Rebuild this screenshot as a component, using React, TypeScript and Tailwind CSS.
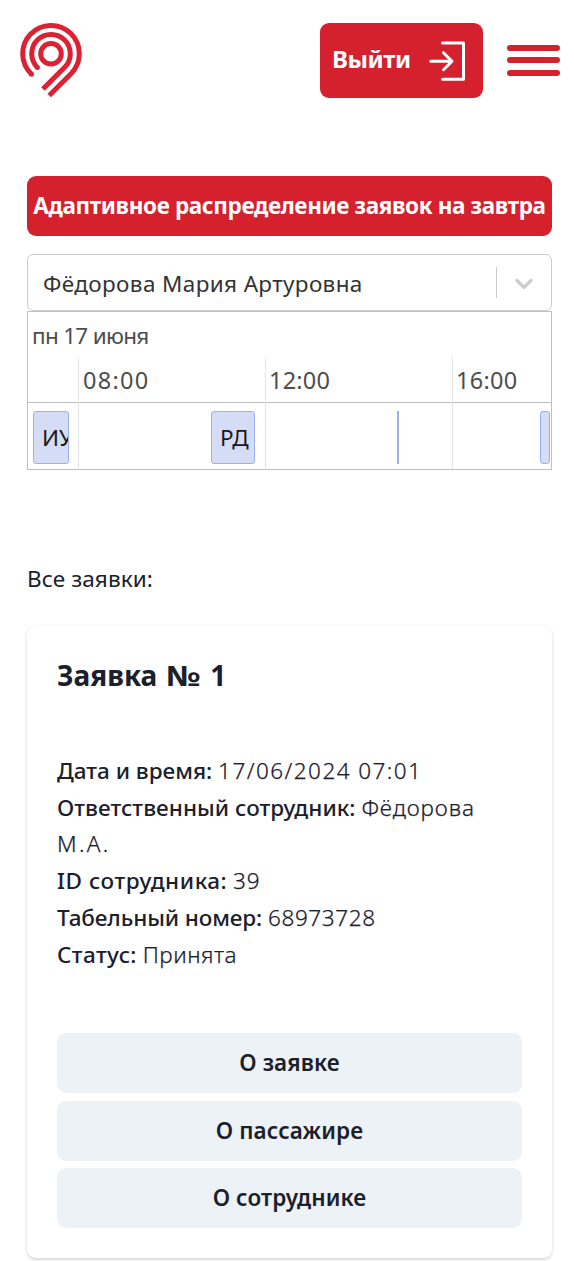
import { ReactNode } from "react";

function Logo() {
  return (
    <svg width="64" height="78" viewBox="19 21 64 78" fill="none" stroke="#dc2133" strokeWidth="5">
      <circle cx="51" cy="53.7" r="10.3" />
      <path d="M31.5 74.2A28.3 28.3 0 1 1 71 73.7L49.2 95.5" />
      <path d="M37.4 67.4A19.3 19.3 0 1 1 64.65 67.35L43 89" />
      <g fill="#dc2133" stroke="none">
        <circle cx="31.5" cy="74.2" r="2.5" />
        <circle cx="37.4" cy="67.6" r="2.5" />
      </g>
    </svg>
  );
}

function ExitIcon() {
  return (
    <svg width="38" height="42" viewBox="429 40 38 42" fill="none" stroke="#fff" strokeWidth="3" strokeLinecap="round" strokeLinejoin="round">
      <path d="M442.5 43H463.5V79.3H442.5" />
      <path d="M430.7 61.2H452M443.5 52.7L452 61.2L443.5 69.7" />
    </svg>
  );
}

function Header() {
  return (
    <header className="flex h-[121px] items-start pl-[19px] pr-[14px]">
      <div className="pt-[21px]"><Logo /></div>
      <button className="ml-auto mt-[23px] flex h-[75px] w-[163px] items-center justify-between rounded-[9px] bg-[#d5212d] pl-[12px] pr-[16px] text-white">
        <span className="whitespace-nowrap pb-[4px] text-[24px] font-bold tracking-[-0.4px]">Выйти</span>
        <ExitIcon />
      </button>
      <button className="ml-[24px] mt-[44.5px] flex w-[53px] flex-col gap-[6.5px]">
        <span className="h-[6px] rounded-full bg-[#d5212d]" />
        <span className="h-[6px] rounded-full bg-[#d5212d]" />
        <span className="h-[6px] rounded-full bg-[#d5212d]" />
      </button>
    </header>
  );
}

function EmployeeSelect() {
  return (
    <div className="mt-[18px] flex h-[57px] items-center rounded-[6px] border border-[#cccccc] pl-[15px] text-[22.5px] text-[#333333]">
      <span className="whitespace-nowrap pt-[2px] tracking-[0.37px]">Фёдорова Мария Артуровна</span>
      <span className="ml-auto h-[31px] w-px bg-[#cccccc]" />
      <svg className="ml-[12px] mr-[12px]" width="30" height="30" viewBox="0 0 20 20" fill="#cccccc">
        <path d="M4.516 7.548c0.436-0.446 1.043-0.481 1.576 0l3.908 3.747 3.908-3.747c0.533-0.481 1.141-0.446 1.574 0 0.436 0.445 0.408 1.197 0 1.615-0.406 0.418-4.695 4.502-4.695 4.502-0.217 0.223-0.502 0.335-0.787 0.335s-0.57-0.112-0.789-0.335c0 0-4.287-4.084-4.695-4.502s-0.436-1.17 0-1.615z" />
      </svg>
    </div>
  );
}

function Timeline() {
  return (
    <div className="h-[159px] overflow-hidden border border-[#bfbfbf] text-[22.5px] text-[#4d4d4d]">
      <div className="h-[45px] pl-[4px] leading-[48px] tracking-[-0.7px]">пн 17 июня</div>
      <div className="grid h-[46px] grid-cols-[50px_187px_187px_1fr] border-b border-[#bfbfbf] text-[23.5px] leading-[46px]">
        <span />
        <span className="border-l border-[#e5e5e5] pl-[4px] tracking-[1.3px]">08:00</span>
        <span className="border-l border-[#e5e5e5] pl-[3px] tracking-[0.2px]">12:00</span>
        <span className="border-l border-[#e5e5e5] pl-[3px] tracking-[0.3px]">16:00</span>
      </div>
      <div className="relative grid h-[66px] grid-cols-[50px_187px_187px_1fr] text-[#1a1a1a]">
        <span />
        <span className="border-l border-[#e5e5e5]" />
        <span className="border-l border-[#e5e5e5]" />
        <span className="border-l border-[#e5e5e5]" />
        <div className="absolute left-[5px] top-[8px] h-[53px] w-[36px] overflow-hidden rounded-[3px] border border-[#97b0f8] bg-[#d5ddf6] pl-[8px] leading-[51px]">ИУ</div>
        <div className="absolute left-[183px] top-[8px] h-[53px] w-[44px] overflow-hidden rounded-[3px] border border-[#97b0f8] bg-[#d5ddf6] pl-[8px] leading-[51px]">РД</div>
        <div className="absolute left-[369px] top-[8px] h-[53px] w-[2px] bg-[#97b0f8]" />
        <div className="absolute left-[512px] top-[8px] h-[53px] w-[10px] rounded-[3px] border border-[#97b0f8] bg-[#d5ddf6]" />
      </div>
    </div>
  );
}

function Field({ label, labelClass = "", valueClass = "", children }: { label: string; labelClass?: string; valueClass?: string; children: ReactNode }) {
  return (
    <p>
      <span className={`font-medium ${labelClass}`}>{label}</span>{" "}
      <span className={`font-light [-webkit-text-stroke:0.25px_#1a202c] ${valueClass}`}>{children}</span>
    </p>
  );
}

function RequestCard() {
  return (
    <article className="mt-[30px] h-[632px] rounded-[9px] bg-white px-[30px] shadow-[0_1.5px_4.5px_rgba(0,0,0,0.1),0_1.5px_3px_rgba(0,0,0,0.06)]">
      <h2 className="pt-[29px] text-[28px] font-bold leading-[40px]">Заявка <span className="ml-[1px] tracking-[2.5px]"><span className="inline-block origin-left scale-x-[1.2] pr-[3.5px]">№</span> 1</span></h2>
      <div className="mt-[58px] text-[22.5px] leading-[36.7px]">
        <Field label="Дата и время:" valueClass="tracking-[1.45px]">17/06/2024 07:01</Field>
        <Field label="Ответственный сотрудник:" labelClass="tracking-[0.05px]" valueClass="tracking-[0.9px]">Фёдорова<br /><span className="tracking-[2.3px]">М.А.</span></Field>
        <Field label="ID сотрудника:" labelClass="tracking-[0.55px]" valueClass="tracking-[0.8px]">39</Field>
        <Field label="Табельный номер:" labelClass="tracking-[-0.1px]" valueClass="tracking-[0.6px]">68973728</Field>
        <Field label="Статус:" labelClass="tracking-[0.4px]" valueClass="tracking-[0.5px]">Принята</Field>
      </div>
      <div className="mt-[60px] flex flex-col gap-[7.5px] text-[22.5px] font-semibold tracking-[0.1px]">
        <button className="h-[60px] rounded-[9px] bg-[#edf2f7]">О заявке</button>
        <button className="h-[60px] rounded-[9px] bg-[#edf2f7]">О пассажире</button>
        <button className="h-[60px] rounded-[9px] bg-[#edf2f7]">О сотруднике</button>
      </div>
    </article>
  );
}

export default function App() {
  return (
    <div className="h-[1261px] overflow-hidden bg-white font-['Noto_Sans',sans-serif] text-[#1a202c]">
      <Header />
      <main className="pl-[27px] pr-[22px] pt-[55px]">
        <button className="flex h-[60px] w-full items-center justify-center whitespace-nowrap rounded-[9px] bg-[#d5212d] text-[22.5px] font-bold tracking-[-0.37px] text-white">
          Адаптивное распределение заявок на завтра
        </button>
        <EmployeeSelect />
        <Timeline />
        <h1 className="mt-[92px] text-[22.5px] leading-[34px] tracking-[0.1px]">Все заявки:</h1>
        <RequestCard />
      </main>
    </div>
  );
}
